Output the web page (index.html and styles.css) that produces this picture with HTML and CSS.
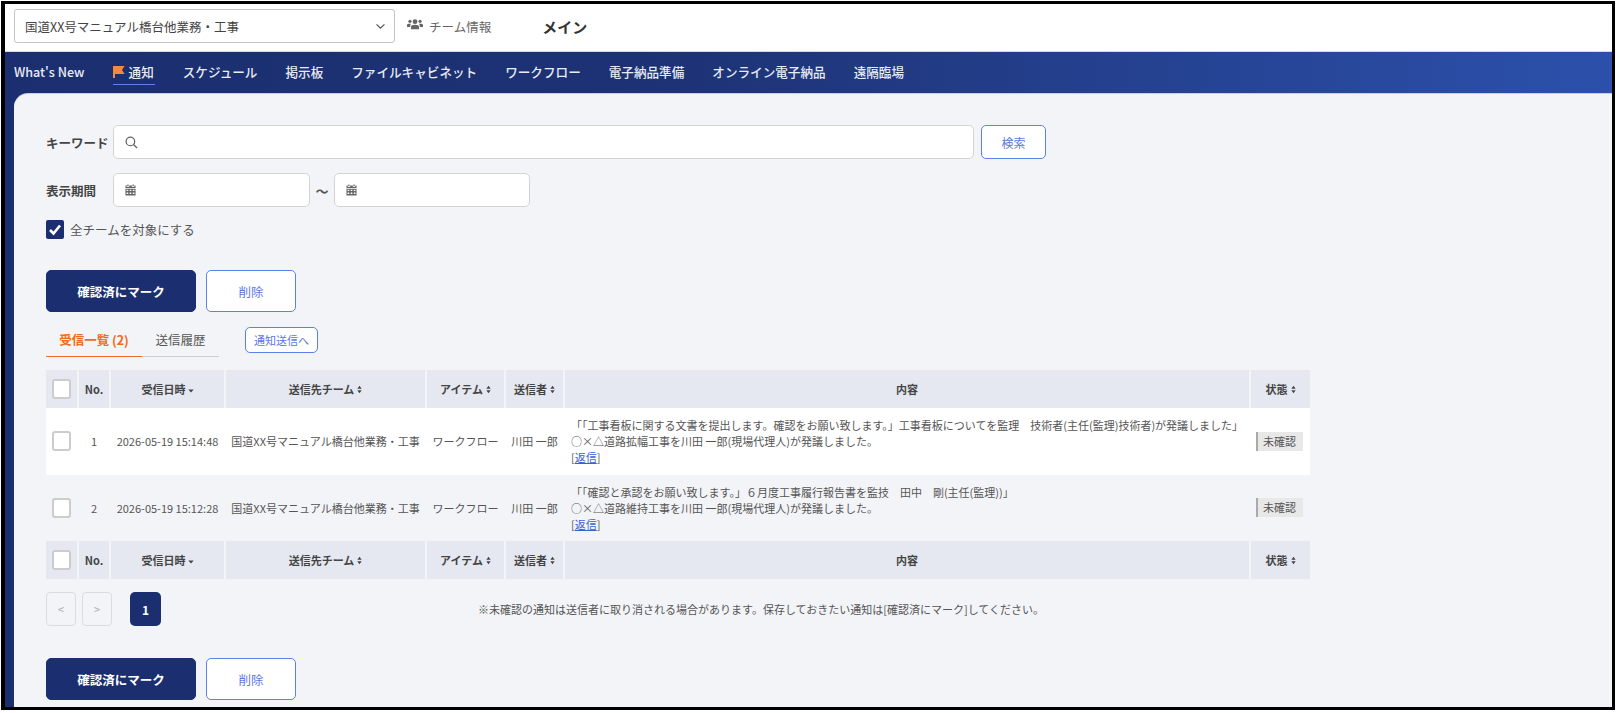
FILE: index.html
```html
<!DOCTYPE html>
<html lang="ja">

<head>
    <meta charset="UTF-8">
    <meta name="viewport" content="width=device-width, initial-scale=1.0">
    <title>通知</title>
    <link rel="stylesheet" href="styles.css">
</head>

<body>
    <svg class="defs" aria-hidden="true">
        <symbol id="sort" viewBox="0 0 6 10">
            <path d="M3 0.5 5.6 4H0.4ZM3 9.5 0.4 6H5.6Z" />
        </symbol>
        <symbol id="sortdown" viewBox="0 0 8 5">
            <path d="M0.4 0.5H7.6L4 4.5Z" />
        </symbol>
        <symbol id="cal" viewBox="0 0 12 13">
            <path d="M2.5 0.5h1.4v2H2.500ZM8.100 0.5h1.400v2H8.100ZM0.500 1.700h1.400v1.500h2.600V1.700h3v1.500h2.600V1.700h1.400v2.700H0.500ZM0.500 5H11.500V12.500H0.500ZM1.700 6.100v1.500h1.800V6.100ZM5.100 6.100v1.500h1.800V6.100ZM8.500 6.100v1.500h1.800V6.100ZM1.700 9.100v1.800h1.800V9.100ZM5.100 9.100v1.800h1.800V9.100ZM8.500 9.100v1.800h1.800V9.100Z" fill-rule="evenodd" />
        </symbol>
    </svg>

    <div class="frame">
        <header class="top">
            <div class="teamselect">
                <span>国道XX号マニュアル橋台他業務・工事</span>
                <svg class="chevron" viewBox="0 0 12 8" fill="none" stroke="#555" stroke-width="1.400">
                    <path d="M1.500 1.500 6 6 10.500 1.500" />
                </svg>
            </div>
            <a class="teaminfo">
                <svg class="teamicon" viewBox="0 0 20 15" fill="#666">
                    <circle cx="10" cy="4" r="3" />
                    <circle cx="3.700" cy="3.500" r="2" />
                    <circle cx="16.300" cy="3.500" r="2" />
                    <path d="M5 13.500v-3c0-2 1.500-2.800 5-2.800s5 .8 5 2.800v3ZM0 10.500V8.300c0-1.300 1-1.800 3.500-1.800 .7 0 1.300 0 1.700.2-.8.700-1.200 1.600-1.200 2.800v1ZM20 10.500V8.300c0-1.300-1-1.800-3.500-1.800-.7 0-1.300 0-1.700.2.800.700 1.200 1.600 1.200 2.800v1Z" />
                </svg>
                チーム情報
            </a>
            <div class="pagename">メイン</div>
        </header>

        <nav class="nav">
            <a>What's New</a>
            <a class="active">
                <svg class="flag" viewBox="0 0 12 12">
                    <path d="M0 0H11.500L9 4 11.500 8H2V12H0Z" fill="#f58a3c" />
                </svg>
                通知
            </a>
            <a>スケジュール</a>
            <a>掲示板</a>
            <a>ファイルキャビネット</a>
            <a>ワークフロー</a>
            <a>電子納品準備</a>
            <a>オンライン電子納品</a>
            <a>遠隔臨場</a>
        </nav>

        <div class="wrap">
            <main class="panel">
                <div class="row">
                    <label class="fieldlabel">キーワード</label>
                    <div class="input keyword">
                        <svg class="searchicon" viewBox="0 0 14 14" fill="none" stroke="#666" stroke-width="1.400">
                            <circle cx="5.800" cy="5.800" r="4.600" />
                            <path d="M9.200 9.200 13 13" />
                        </svg>
                    </div>
                    <button class="btn searchbtn">検索</button>
                </div>

                <div class="row daterow">
                    <label class="fieldlabel">表示期間</label>
                    <div class="input date1">
                        <svg class="calicon">
                            <use href="#cal" />
                        </svg>
                    </div>
                    <span class="tilde">～</span>
                    <div class="input date2">
                        <svg class="calicon">
                            <use href="#cal" />
                        </svg>
                    </div>
                </div>

                <div class="row allteam">
                    <span class="checked">
                        <svg viewBox="0 0 18 18" fill="none" stroke="#fff" stroke-width="2.600">
                            <path d="M4 9.500 7.500 13 14 5" />
                        </svg>
                    </span>
                    <span>全チームを対象にする</span>
                </div>

                <div class="actions first">
                    <button class="btn primary">確認済にマーク</button>
                    <button class="btn outline">削除</button>
                </div>

                <div class="tabs">
                    <a class="tab current">受信一覧 (2)</a>
                    <a class="tab">送信履歴</a>
                    <button class="btn sendbtn">通知送信へ</button>
                </div>

                <table class="list">
                    <thead>
                        <tr>
                            <th class="c-check"><span class="box"></span></th>
                            <th class="c-no">No.</th>
                            <th class="c-date">受信日時<svg class="sd"><use href="#sortdown" /></svg></th>
                            <th class="c-team">送信先チーム<svg class="so"><use href="#sort" /></svg></th>
                            <th class="c-item">アイテム<svg class="so"><use href="#sort" /></svg></th>
                            <th class="c-from">送信者<svg class="so"><use href="#sort" /></svg></th>
                            <th class="c-body">内容</th>
                            <th class="c-state">状態<svg class="so"><use href="#sort" /></svg></th>
                        </tr>
                    </thead>
                    <tbody>
                        <tr>
                            <td class="center"><span class="box"></span></td>
                            <td class="center">1</td>
                            <td class="center">2026-05-19 15:14:48</td>
                            <td class="center">国道XX号マニュアル橋台他業務・工事</td>
                            <td class="center">ワークフロー</td>
                            <td class="center">川田 一郎</td>
                            <td class="msg">「「工事看板に関する文書を提出します。確認をお願い致します。」工事看板についてを監理　技術者(主任(監理)技術者)が発議しました」<br>
                                ○×△道路拡幅工事を川田 一郎(現場代理人)が発議しました。<br>
                                [<a class="reply">返信</a>]</td>
                            <td class="center"><span class="badge">未確認</span></td>
                        </tr>
                        <tr class="even">
                            <td class="center"><span class="box"></span></td>
                            <td class="center">2</td>
                            <td class="center">2026-05-19 15:12:28</td>
                            <td class="center">国道XX号マニュアル橋台他業務・工事</td>
                            <td class="center">ワークフロー</td>
                            <td class="center">川田 一郎</td>
                            <td class="msg">「「確認と承認をお願い致します。」６月度工事履行報告書を監技　田中　剛(主任(監理))」<br>
                                ○×△道路維持工事を川田 一郎(現場代理人)が発議しました。<br>
                                [<a class="reply">返信</a>]</td>
                            <td class="center"><span class="badge">未確認</span></td>
                        </tr>
                    </tbody>
                    <tfoot>
                        <tr>
                            <th><span class="box"></span></th>
                            <th>No.</th>
                            <th>受信日時<svg class="sd"><use href="#sortdown" /></svg></th>
                            <th>送信先チーム<svg class="so"><use href="#sort" /></svg></th>
                            <th>アイテム<svg class="so"><use href="#sort" /></svg></th>
                            <th>送信者<svg class="so"><use href="#sort" /></svg></th>
                            <th>内容</th>
                            <th>状態<svg class="so"><use href="#sort" /></svg></th>
                        </tr>
                    </tfoot>
                </table>

                <div class="pager">
                    <button class="pagebtn">&lt;</button>
                    <button class="pagebtn">&gt;</button>
                    <button class="pagenum">1</button>
                    <p class="note">※未確認の通知は送信者に取り消される場合があります。保存しておきたい通知は[確認済にマーク]してください。</p>
                </div>

                <div class="actions last">
                    <button class="btn primary">確認済にマーク</button>
                    <button class="btn outline">削除</button>
                </div>
            </main>
        </div>
    </div>
</body>

</html>
```

FILE: styles.css
```css
* {
    margin: 0;
    padding: 0;
    box-sizing: border-box;
}

html,
body {
    height: 100%;
    background-color: #fff;
    overflow: hidden;
}

body {
    padding: 1px 3px 3px 1px;
    font-family: "Noto Sans CJK JP", "Noto Sans", sans-serif;
    font-size: 12.5px;
    color: #555;
}

.defs {
    display: none;
}

.frame {
    height: 100%;
    border: 3px solid #000;
    border-left-width: 4px;
    overflow: hidden;
    display: flex;
    flex-direction: column;
}

/* top bar */
.top {
    height: 48px;
    flex: none;
    display: flex;
    align-items: center;
    padding: 0 0 3px 9px;
    background-color: #fff;
    border-bottom: 1px solid #d5d8e6;
}

.teamselect {
    width: 381px;
    height: 34px;
    display: flex;
    align-items: center;
    justify-content: space-between;
    padding: 0 8px 0 10px;
    border: 1px solid #c4c4c4;
    border-radius: 3px;
    color: #444;
}

.chevron {
    width: 11px;
    height: 7px;
}

.teaminfo {
    display: flex;
    align-items: center;
    margin-left: 12px;
    color: #666;
}

.teamicon {
    width: 16px;
    height: 13px;
    margin-right: 6px;
    margin-top: -3px;
}

.pagename {
    margin-left: 51px;
    font-size: 15px;
    font-weight: 700;
    color: #333;
}

/* navigation */
.nav {
    height: 42px;
    flex: none;
    display: flex;
    align-items: center;
    gap: 28px;
    padding: 0 0 2px 9px;
    background: linear-gradient(90deg, #1b2f70 0%, #1d3274 40%, #2c50ab 100%);
    font-size: 12.6px;
    font-weight: 500;
    color: #e8ebf4;
}

.nav a {
    white-space: nowrap;
    line-height: 24px;
}

.nav .active {
    display: flex;
    align-items: center;
    gap: 4px;
    padding-right: 1px;
    border-bottom: 1px solid #5b82e8;
    margin-top: 1px;
}

.flag {
    width: 12px;
    height: 12px;
}

/* content */
.wrap {
    flex: 1;
    min-height: 0;
    background-color: #1b2f70;
    padding-left: 9px;
}

.panel {
    height: 100%;
    background-color: #f3f4f8;
    border-top-left-radius: 14px;
    box-shadow: 0 -1px 0 #c9cde6;
    padding: 31px 0 0 32px;
}

.row {
    display: flex;
    align-items: center;
}

.fieldlabel {
    width: 67px;
    font-weight: 700;
    color: #444;
}

.input {
    height: 34px;
    display: flex;
    align-items: center;
    background-color: #fff;
    border: 1px solid #d4d4d4;
    border-radius: 5px;
    padding-left: 11px;
}

.keyword {
    width: 861px;
}

.searchicon {
    width: 13px;
    height: 13px;
}

.date1 {
    width: 197px;
}

.date2 {
    width: 196px;
}

.calicon {
    width: 11px;
    height: 12px;
    fill: #666;
}

.tilde {
    width: 24px;
    text-align: center;
    font-size: 13px;
    font-weight: 700;
}

.daterow {
    margin-top: 14px;
}

.allteam {
    margin-top: 13px;
    gap: 6px;
}

.checked {
    width: 18px;
    height: 19px;
    border-radius: 2px;
    background-color: #1b2f70;
    display: flex;
}

.btn {
    font-family: inherit;
    font-size: 12.5px;
    border-radius: 5px;
    background-color: #fff;
    border: 1.5px solid #5b82e8;
    color: #5b78de;
}

.searchbtn {
    width: 65px;
    height: 34px;
    margin-left: 7px;
    font-size: 12px;
}

.actions {
    display: flex;
    gap: 10px;
}

.actions .btn {
    height: 42px;
}

.first {
    margin-top: 31px;
}

.last {
    margin-top: 32px;
}

.primary {
    width: 150px;
    background-color: #1b2f70;
    border-color: #1b2f70;
    color: #fff;
    font-weight: 700;
}

.outline {
    width: 90px;
}

/* tabs */
.tabs {
    display: flex;
    height: 30px;
    margin-top: 15px;
}

.tab {
    height: 30px;
    padding-top: 3px;
    border-bottom: 1px solid #ccc;
    text-align: center;
    color: #555;
}

.tab.current {
    width: 96px;
    border-bottom: 1px solid #f26b21;
    color: #f26b21;
    font-weight: 700;
}

.tab:nth-child(2) {
    width: 77px;
}

.sendbtn {
    width: 73px;
    height: 26px;
    margin-left: 26px;
    font-size: 11px;
}

/* table */
.list {
    width: 1264px;
    margin-top: 13px;
    table-layout: fixed;
    border-collapse: collapse;
    font-size: 11px;
}

.list th {
    height: 38px;
    background-color: #e5e8f1;
    border-right: 2px solid #f3f4f8;
    color: #444;
    font-weight: 700;
    white-space: nowrap;
}

.list th:last-child {
    border-right: 0;
}

.c-check {
    width: 32px;
}

.c-no {
    width: 32px;
}

.c-date {
    width: 115px;
}

.c-team {
    width: 201px;
}

.c-item {
    width: 79px;
}

.c-from {
    width: 59px;
}

.c-state {
    width: 60px;
}

.list td {
    height: 66.500px;
    background-color: #fff;
    white-space: nowrap;
}

.list .even td {
    background-color: #f3f4f8;
}

.center {
    text-align: center;
}

.msg {
    padding-left: 7px;
    line-height: 16px;
}

.reply {
    color: #3b5fd6;
    text-decoration: underline;
}

.box {
    display: block;
    width: 19px;
    height: 20px;
    margin: 0 auto;
    margin-left: 6px;
    background-color: #fff;
    border: 2px solid #ccc;
    border-radius: 3px;
}

.so {
    width: 5px;
    height: 9px;
    margin-left: 3px;
    fill: #444;
}

.sd {
    width: 6px;
    height: 4px;
    margin-left: 2px;
    margin-bottom: 1px;
    fill: #444;
}

.badge {
    display: block;
    width: 47px;
    height: 19px;
    line-height: 19px;
    margin-left: 6px;
    background-color: #e8e8e8;
    border-left: 2px solid #aaa;
    padding-left: 5px;
    text-align: left;
}

/* pager */
.pager {
    display: flex;
    align-items: center;
    margin-top: 13px;
}

.pagebtn {
    width: 30px;
    height: 34px;
    margin-right: 6px;
    background-color: transparent;
    border: 1.500px solid #dcdcdc;
    border-radius: 4px;
    color: #aaa;
    font-size: 11px;
    font-family: inherit;
}

.pagenum {
    width: 31px;
    height: 34px;
    margin-left: 12px;
    background-color: #1b2f70;
    border: 0;
    border-radius: 5px;
    color: #fff;
    font-weight: 700;
    font-size: 12px;
    font-family: inherit;
}

.note {
    margin-left: 317px;
    font-size: 11px;
    white-space: nowrap;
}
```
